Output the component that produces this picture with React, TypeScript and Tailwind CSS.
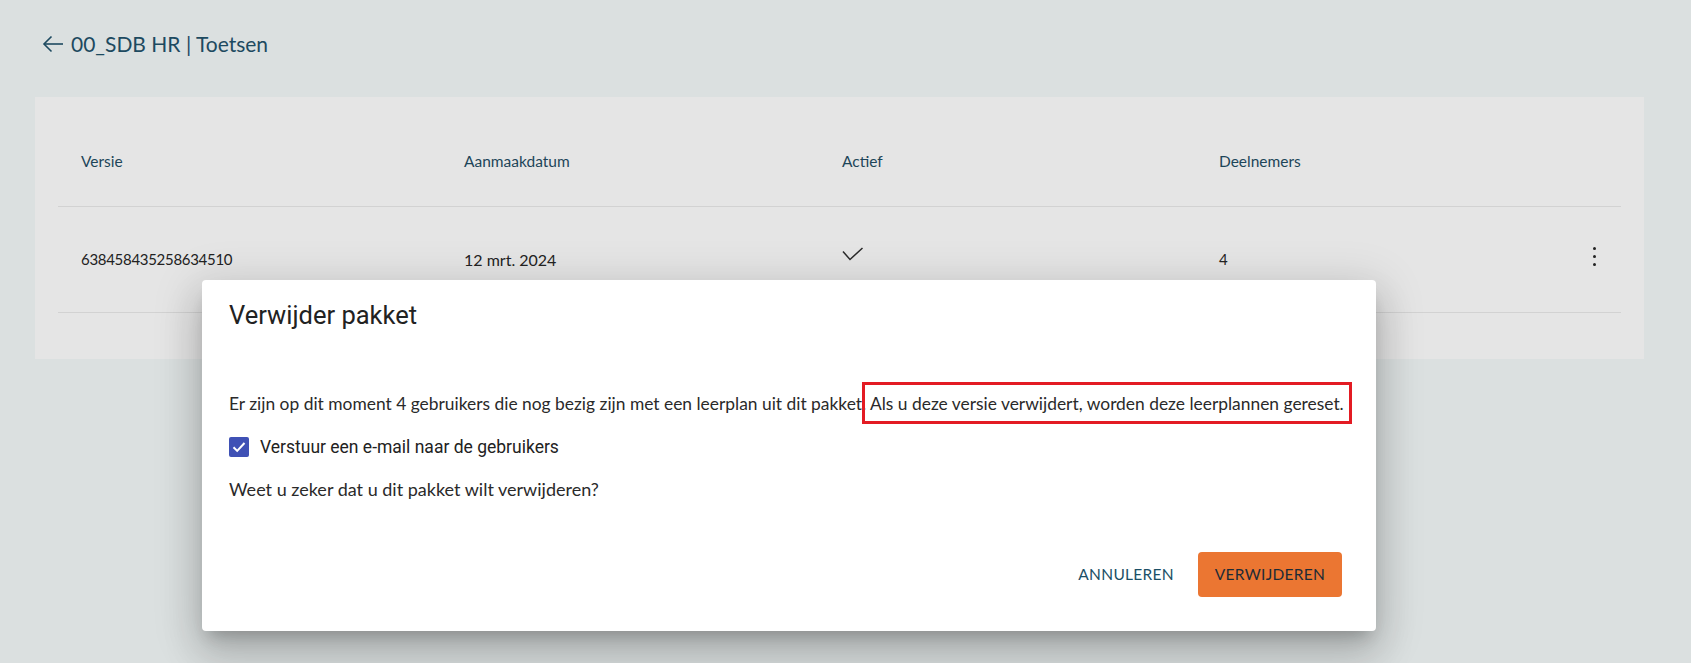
import React from "react";

const DIALOG_SHADOW =
  "shadow-[0_11px_15px_-7px_rgba(0,0,0,0.2),0_24px_38px_3px_rgba(0,0,0,0.14),0_9px_46px_8px_rgba(0,0,0,0.12)]";

function BackArrow() {
  return (
    <svg width="22" height="18" viewBox="0 0 22 18" fill="none" stroke="#1d4a60" strokeWidth="1.6">
      <path d="M21 9H2" />
      <path d="M9.5 1.5L2 9l7.5 7.5" />
    </svg>
  );
}

function ThinCheck() {
  return (
    <svg width="22" height="16" viewBox="0 0 22 16" fill="none" stroke="#2a2a2a" strokeWidth="1.5">
      <path d="M1 4.5l7 8L20.5 1" />
    </svg>
  );
}

function Kebab() {
  return (
    <div className="flex flex-col items-center gap-[5px]">
      <span className="w-[3px] h-[3px] rounded-full bg-[#222]" />
      <span className="w-[3px] h-[3px] rounded-full bg-[#222]" />
      <span className="w-[3px] h-[3px] rounded-full bg-[#222]" />
    </div>
  );
}

export default function App() {
  return (
    <div className="relative min-h-[663px] overflow-hidden bg-[#dbe0e0] font-['Lato',sans-serif]">
      <div className="pl-[35px] pr-[47px] pt-[30px]">
        {/* page title */}
        <div className="flex h-[28px] items-center gap-[7px] pl-[7px] text-[#1d4a60]">
          <BackArrow />
          <span className="text-[21px]">00_SDB HR | Toetsen</span>
        </div>

        {/* versions table */}
        <div className="mt-[39px] bg-[#e5e5e5] px-[23px] pb-[46px] pt-[20px]">
          <div className="grid h-[90px] grid-cols-[383px_378px_377px_1fr_60px] items-center border-b border-[#d2d2d2] text-[15.5px] text-[#1d4559]">
            <div className="pl-[23px]">Versie</div>
            <div className="pl-[23px]">Aanmaakdatum</div>
            <div className="pl-[23px]">Actief</div>
            <div className="pl-[23px]">Deelnemers</div>
            <div />
          </div>
          <div className="grid h-[106px] grid-cols-[383px_378px_377px_1fr_60px] items-center border-b border-[#d2d2d2] text-[15px] text-[#222]">
            <div className="pl-[23px] tracking-[-0.3px]">638458435258634510</div>
            <div className="pl-[23px] text-[16px]">12 mrt. 2024</div>
            <div className="pl-[23px] -mt-[9px]">
              <ThinCheck />
            </div>
            <div className="pl-[23px]">4</div>
            <div className="flex justify-end pr-[25px] -mt-[6px]">
              <Kebab />
            </div>
          </div>
        </div>
      </div>

      {/* delete dialog */}
      <div
        className={`absolute left-[202px] top-[280px] flex h-[351px] w-[1174px] flex-col rounded-[4px] bg-white pb-[34px] pl-[27px] pr-[34px] pt-[19px] ${DIALOG_SHADOW}`}
      >
        <h2 className="font-['Roboto',sans-serif] text-[25.5px] leading-[32px] text-[#222]">Verwijder pakket</h2>

        <p className="mt-[61px] whitespace-nowrap text-[17.4px] leading-[24px] text-[#2a2a2a]">
          Er zijn op dit moment 4 gebruikers die nog bezig zijn met een leerplan uit dit pakket.{" "}
          <span className="relative">
            Als u deze versie verwijdert, worden deze leerplannen gereset.
            <span className="absolute -bottom-[10px] -left-[8px] -right-[8px] -top-[11px] border-[3px] border-[#e31b23]" />
          </span>
        </p>

        <label className="mt-[19px] flex h-[24px] items-center gap-[11px] font-['Roboto',sans-serif] text-[17.5px] text-[#222]">
          <span className="flex h-[20px] w-[20px] items-center justify-center rounded-[2px] bg-[#3f51b5]">
            <svg width="14" height="12" viewBox="0 0 14 12" fill="none" stroke="white" strokeWidth="2">
              <path d="M1.5 6.2l3.7 3.7L12.5 2" />
            </svg>
          </span>
          Verstuur een e-mail naar de gebruikers
        </label>

        <p className="mt-[18px] text-[18px] leading-[24px] text-[#2a2a2a]">Weet u zeker dat u dit pakket wilt verwijderen?</p>

        <div className="mt-auto flex items-center justify-end gap-[8px]">
          <button className="h-[45px] px-[16px] text-[15.5px] uppercase tracking-[0.3px] text-[#1b4f66]">Annuleren</button>
          <button className="h-[45px] w-[144px] rounded-[4px] bg-[#eb7632] text-[15.5px] uppercase tracking-[0.3px] text-[#1d2b36]">
            Verwijderen
          </button>
        </div>
      </div>
    </div>
  );
}
